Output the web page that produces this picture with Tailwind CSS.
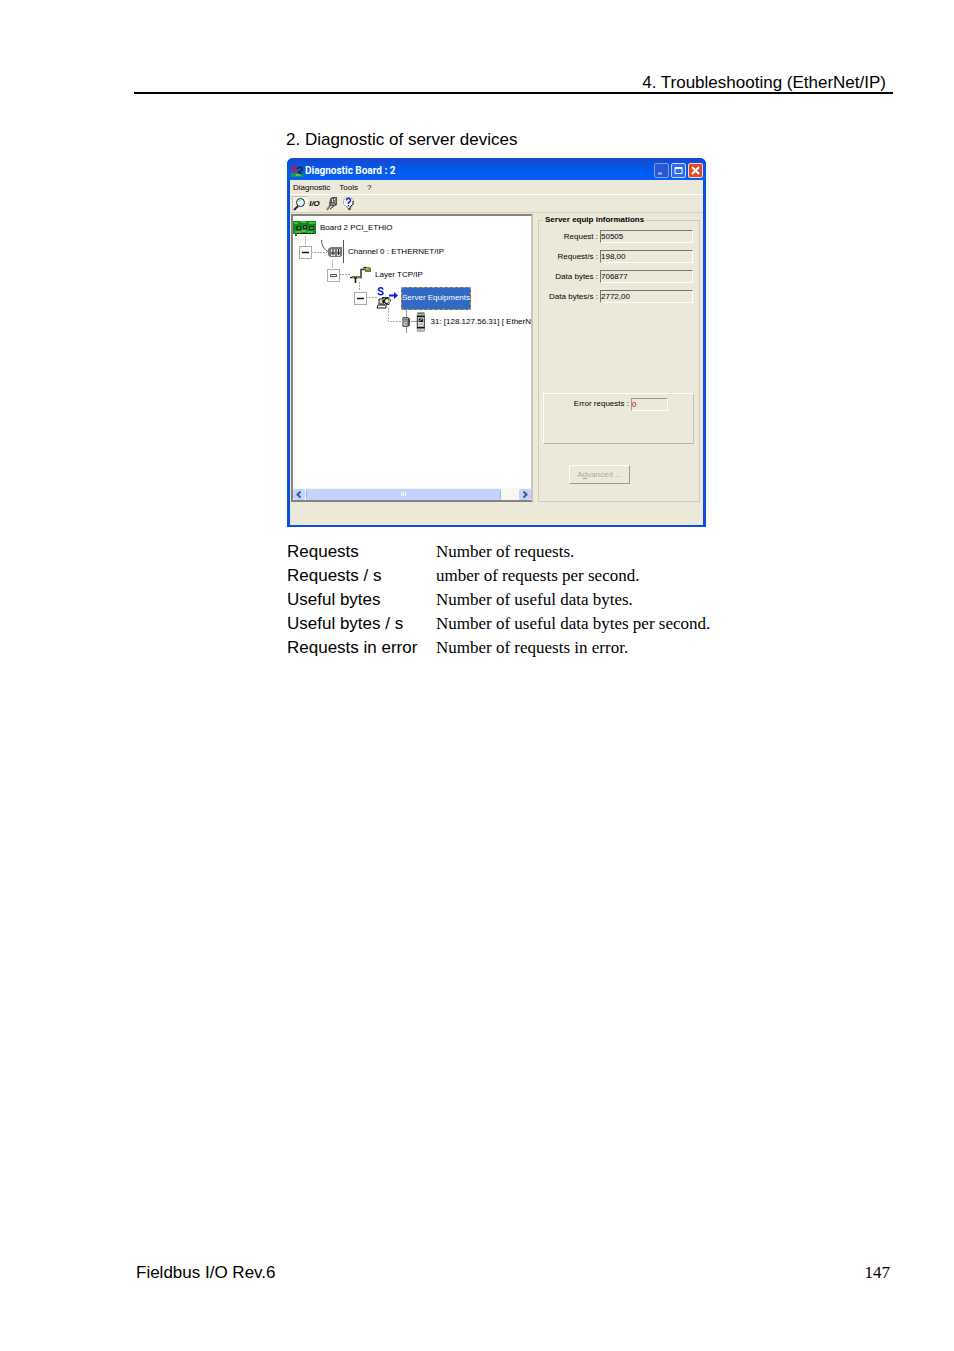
<!DOCTYPE html>
<html lang="en">

<head>
    <meta charset="UTF-8">
    <meta name="viewport" content="width=device-width, initial-scale=1.0">
    <title>Fieldbus I/O - Troubleshooting (EtherNet/IP)</title>
    <script src="https://cdn.jsdelivr.net/npm/@tailwindcss/browser@4"></script>
</head>

<body class="bg-white text-black font-['Liberation_Sans',Arial,sans-serif] text-[17px] leading-6">

    <div class="min-h-screen flex flex-col pl-[134px] pr-[61px] pt-[74px] pb-[66px]">

        <header class="border-b-2 border-black text-right pr-[7px] leading-[18px]">4. Troubleshooting (EtherNet/IP)</header>

        <main class="flex-1 pl-[152px] pt-[34px]">
            <h1>2. Diagnostic of server devices</h1>

            <!-- Diagnostic window -->
            <section class="ml-px mt-[6px] w-[419px] rounded-t-md bg-[#0a4fe0] pb-[2px] px-[3px] text-[8px] leading-3 overflow-hidden">

                <div class="-mx-[3px] h-[22px] flex items-center gap-[2px] pl-1 pr-[3px] pt-[3px] bg-linear-to-b from-[#1648c8] via-[#0058ee] to-[#0560f8] text-white">
                    <svg class="w-3 h-3" viewBox="0 0 12 12">
                        <path d="M0 8h12v4H0z" fill="#139a55" />
                        <path d="M1.500 1v7M1 1.500h2l2 2v3l-2 1" fill="none" stroke="#d5182c" stroke-width="1.500" />
                        <path d="M6 4l2-2 3 1v2L7 8M8 8l3 1" fill="none" stroke="#222" stroke-width="1.500" />
                        <path d="M5 10h5" stroke="#7ee0a0" />
                    </svg>
                    <span class="flex-1 font-bold text-[10px] font-[Roboto,sans-serif]">Diagnostic Board : 2</span>
                    <button aria-label="Minimize" class="w-[15px] h-[15px] rounded-xs border border-[#7d9cf0] bg-[#2a56cf]">
                        <svg viewBox="0 0 13 13"><path d="M3 9.500h4" stroke="#a9bdf5" stroke-width="2" /></svg>
                    </button>
                    <button aria-label="Maximize" class="w-[15px] h-[15px] rounded-xs border border-[#c5d5fb] bg-[#2f6bea]">
                        <svg viewBox="0 0 13 13"><path d="M3 3.500h7v6H3zM3 4.500h7" fill="none" stroke="#fff" /></svg>
                    </button>
                    <button aria-label="Close" class="w-[15px] h-[15px] rounded-xs border border-[#f6d5cc] bg-[#dc4b2a]">
                        <svg viewBox="0 0 13 13"><path d="M3 3l7 7M10 3l-7 7" stroke="#fff" stroke-width="2" /></svg>
                    </button>
                </div>

                <div class="bg-[#ece9d8] pb-[23px]">
                    <nav class="h-[15px] flex items-center gap-[9px] pl-[3px] pt-[2px] border-b border-white">
                        <button>Diagnostic</button>
                        <button>Tools</button>
                        <button>?</button>
                    </nav>

                    <div class="h-[18px] flex items-center pl-[2px] border-b border-[#d3d0bf]">
                        <button aria-label="Search" class="w-4 h-4 border-t border-l border-[#c9c6b6] bg-[#f4f2e8]">
                            <svg viewBox="0 0 15 15">
                                <path d="M5 9l-4 4" stroke="#222" stroke-width="2" />
                                <circle cx="7.500" cy="5.500" r="4" fill="#dff" stroke="#222" />
                                <path d="M5.500 4.500l2-1.500" stroke="#2cc" />
                            </svg>
                        </button>
                        <button class="w-[17px] font-bold italic text-[8px] leading-3 pr-1">I/O</button>
                        <button aria-label="Settings" class="w-4 h-4">
                            <svg viewBox="0 0 16 16">
                                <path d="M6 8l-4 6" stroke="#777" stroke-width="2" />
                                <path d="M5 13l4-3" stroke="#222" />
                                <path d="M5 3l2-2h5v8l-2 1H6L4 8z" fill="#555" />
                                <path d="M7 3h3v3H7z" fill="#eee" />
                                <path d="M10 2v5M6 8h4" stroke="#bbb" />
                                <path d="M8 4h1v2" fill="none" stroke="#111" />
                            </svg>
                        </button>
                        <button aria-label="Help" class="w-4 h-4">
                            <svg viewBox="0 0 16 16">
                                <path d="M7 1.500c7 0 7 9 2 10l-1 3-1-3c-6-1-6-10 0-10z" fill="#fff" stroke="#888" stroke-dasharray="2 1" />
                                <path d="M12 5v3l-3 3v3l-2-2" fill="none" stroke="#222" />
                                <path d="M5.500 4.500q0-2 2-2t2 2q0 1-2 2v1.500M7.500 9v1.500" fill="none" stroke="#22d" stroke-width="1.500" />
                            </svg>
                        </button>
                    </div>

                    <div class="flex gap-[5px] pl-px pr-[3px] pt-px">

                        <!-- Device tree -->
                        <div class="relative w-[242px] h-[288px] flex flex-col border-2 border-[#85837a] border-r-[#c9c6b6] bg-white overflow-hidden">
                            <svg class="absolute left-0 top-0 w-[238px] h-[120px]" viewBox="0 0 238 120" fill="none">
                                <path d="M12.500 20v10M18 36.500h16M39.500 44v8M46 58.500h12M66.500 66v8M73 81.500h12M95.500 92v13.500H109" stroke="#aaa" stroke-dasharray="2 1" />
                                <path d="M28.500 24q0 8 7 12" stroke="#555" />
                                <path d="M50.500 24v23" stroke="#555" />
                                <path d="M113.500 93v24M118 105.500h7" stroke="#999" />
                            </svg>

                            <ul class="relative flex-1 whitespace-nowrap">
                                <li class="h-6 flex items-center gap-[3px]">
                                    <svg class="w-6 h-4" viewBox="0 0 24 16">
                                        <path d="M0 1h23v13H4v2H2v-2H0z" fill="#118a1c" />
                                        <path d="M1 3h4M8 2h5M16 3h6M2 12h7M14 12h6" stroke="#54cf35" stroke-width="1.500" />
                                        <path d="M3 6h5v4H3zM10 5h4v4h-4zM16 6h5v4h-5z" fill="#173317" />
                                        <path d="M5 8h2M11 7h2M17 8h3M9 11h4" stroke="#c3dcbb" />
                                        <path d="M4 13.500h17" stroke="#111" stroke-dasharray="2 1" />
                                    </svg>
                                    <span>Board 2 PCI_ETHIO</span>
                                </li>
                                <li class="h-6 flex items-center pl-[6px]">
                                    <button aria-label="Collapse" class="w-[13px] h-[13px] border border-[#aaa] bg-white">
                                        <svg viewBox="0 0 11 11"><path d="M2 5.500h7" stroke="#111" stroke-width="1.500" /></svg>
                                    </button>
                                    <svg class="ml-4 mr-[5px] w-[15px] h-3" viewBox="0 0 15 12">
                                        <path d="M0 3l3-2h11v9l-2 1H2L0 9z" fill="#777" />
                                        <path d="M3 3h4v3H3zM9 3h3v3H9zM3 8h4v2H3zM9 8h3v2H9z" fill="#ddd" />
                                        <path d="M5 3v6M10.500 3v6" stroke="#222" />
                                    </svg>
                                    <span>Channel 0 : ETHERNET/IP</span>
                                </li>
                                <li class="h-[22px] flex items-center pl-[34px]">
                                    <button aria-label="Collapse" class="w-[13px] h-[13px] border border-[#aaa] bg-white">
                                        <svg viewBox="0 0 11 11"><path d="M2.500 4.500h6v2h-6z" fill="none" stroke="#555" /></svg>
                                    </button>
                                    <svg class="ml-[10px] mr-[3px] w-[22px] h-[18px]" viewBox="0 0 22 18">
                                        <path d="M0 11.500h11V3.500h6" fill="none" stroke="#333" stroke-width="1.500" />
                                        <path d="M5.500 12v5" stroke="#111" stroke-width="1.500" />
                                        <path d="M2 10h8v2H2z" fill="#777c3a" />
                                        <path d="M15 1h4l2 1v4h-6z" fill="#777c3a" />
                                        <path d="M16 3h3" stroke="#ddd" />
                                        <path d="M13 2l3-1M4 12h3" stroke="#111" />
                                    </svg>
                                    <span>Layer TCP/IP</span>
                                </li>
                                <li class="h-6 flex items-center pl-[61px]">
                                    <button aria-label="Collapse" class="w-[13px] h-[13px] border border-[#aaa] bg-white">
                                        <svg viewBox="0 0 11 11"><path d="M2 5.500h7" stroke="#111" stroke-width="1.500" /></svg>
                                    </button>
                                    <svg class="ml-[9px] mr-px w-6 h-6" viewBox="0 0 24 24">
                                        <path d="M7 3.500C6.500 1 2.500 1.500 2.500 3.500S7 5 7 7s-4 2.500-5 0" fill="none" stroke="#1616dc" stroke-width="1.500" />
                                        <path d="M13 9.500h6" stroke="#1616dc" stroke-width="2" />
                                        <path d="M18 6l4 3.500-4 3.500z" fill="#1616dc" />
                                        <path d="M3 13h6v5H3z" fill="#ddd" stroke="#222" />
                                        <path d="M2 19h8v3H1z" fill="#fff" stroke="#111" />
                                        <path d="M6 11h7l2 3-2 5H9l-3-3z" fill="#222" />
                                        <path d="M6 14l3-2M8 17l2 2" stroke="#eee11c" />
                                        <circle cx="11" cy="15" r="2" fill="#eee" />
                                        <path d="M12 12h1.500v5l-2 1" fill="none" stroke="#aaa" />
                                    </svg>
                                    <span class="h-[23px] flex items-center bg-[#316ac5] text-white border border-dashed border-[#c99b4a]">Server Equipments</span>
                                </li>
                                <li class="h-6 flex items-center pl-[109px]">
                                    <svg class="w-[10px] h-3" viewBox="0 0 10 12">
                                        <path d="M1 1h6v10H1z" fill="#bcbfb6" stroke="#333" />
                                        <path d="M7 1l2 1v8l-2 1z" fill="#444" />
                                        <path d="M2 3h4M2 5h4" stroke="#555" />
                                        <path d="M4 8h2" stroke="#2b8a4a" />
                                    </svg>
                                    <svg class="mx-[5px] w-[11px] h-6" viewBox="0 0 11 24">
                                        <path d="M1.500 1.500h8v21h-8z" fill="#ddd" stroke="#888" />
                                        <path d="M2 2.500h7" stroke="#4d9a5c" stroke-width="2" />
                                        <path d="M1 5.500h9M1 18.500h9" stroke="#111" stroke-width="2" />
                                        <path d="M3 8h5v4H3z" fill="#111" />
                                        <path d="M4 11l3-3" stroke="#fff" />
                                        <path d="M3 14.500h5M3 21h4" stroke="#999" />
                                        <path d="M1.500 7v10M9.500 7v10" stroke="#333" />
                                    </svg>
                                    <span>31: [128.127.56.31] [ EtherN</span>
                                </li>
                            </ul>

                            <!-- Horizontal scrollbar -->
                            <div class="h-3 flex items-center bg-[#f7f6f0]">
                                <button aria-label="Scroll left" class="w-3 h-[11px] rounded-xs bg-[#c3d3fd]">
                                    <svg class="w-3 h-[11px]" viewBox="0 0 12 11"><path d="M7.500 2.500l-3 3 3 3" fill="none" stroke="#3d5590" stroke-width="2" /></svg>
                                </button>
                                <div class="ml-px w-[195px] h-[11px] rounded-xs border-x border-[#9db2e8] bg-[#c3d3fd] flex justify-center items-center gap-px">
                                    <i class="w-px h-1 bg-white"></i>
                                    <i class="w-px h-1 bg-white"></i>
                                    <i class="w-px h-1 bg-white"></i>
                                </div>
                                <button aria-label="Scroll right" class="ml-auto w-3 h-[11px] rounded-xs bg-[#c3d3fd]">
                                    <svg class="w-3 h-[11px]" viewBox="0 0 12 11"><path d="M4.500 2.500l3 3-3 3" fill="none" stroke="#3d5590" stroke-width="2" /></svg>
                                </button>
                            </div>
                        </div>

                        <!-- Counters -->
                        <fieldset class="flex-1 min-w-0 flex flex-col border border-[#cfccba] pl-1 pr-[5px]">
                            <legend class="px-[2px] font-bold">Server equip informations</legend>

                            <div class="flex flex-col gap-[7px] pt-1 pr-px">
                                <div class="flex justify-end items-center gap-[2px]">
                                    <label for="request">Request :</label>
                                    <input id="request" readonly value="50505" class="w-[93px] h-[13px] border border-t-[#77756a] border-l-[#77756a] border-r-white border-b-white">
                                </div>
                                <div class="flex justify-end items-center gap-[2px]">
                                    <label for="request-s">Request/s :</label>
                                    <input id="request-s" readonly value="198,00" class="w-[93px] h-[13px] border border-t-[#77756a] border-l-[#77756a] border-r-white border-b-white">
                                </div>
                                <div class="flex justify-end items-center gap-[2px]">
                                    <label for="bytes">Data bytes :</label>
                                    <input id="bytes" readonly value="706877" class="w-[93px] h-[13px] border border-t-[#77756a] border-l-[#77756a] border-r-white border-b-white">
                                </div>
                                <div class="flex justify-end items-center gap-[2px]">
                                    <label for="bytes-s">Data bytes/s :</label>
                                    <input id="bytes-s" readonly value="2772,00" class="w-[93px] h-[13px] border border-t-[#77756a] border-l-[#77756a] border-r-white border-b-white">
                                </div>
                            </div>

                            <div class="mt-[90px] h-[51px] flex justify-end items-start gap-[2px] pt-1 pr-[25px] border border-t-white border-l-white border-r-[#c3c0ae] border-b-[#b5b2a1]">
                                <label for="errors">Error requests :</label>
                                <input id="errors" readonly value="0" class="w-[37px] h-[13px] text-[#c00000] border border-t-[#99968a] border-l-[#99968a] border-r-white border-b-white">
                            </div>

                            <button disabled class="mt-[21px] ml-[26px] w-[61px] h-[19px] border border-t-white border-l-white border-r-[#99968a] border-b-[#99968a] text-[#aca899]">A<u>d</u>vanced ...</button>
                        </fieldset>
                    </div>
                </div>
            </section>

            <dl class="ml-px mt-[13px] grid grid-cols-[149px_1fr]">
                <dt>Requests</dt>
                <dd class="font-['Liberation_Serif',serif]">Number of requests.</dd>
                <dt>Requests / s</dt>
                <dd class="font-['Liberation_Serif',serif]">umber of requests per second.</dd>
                <dt>Useful bytes</dt>
                <dd class="font-['Liberation_Serif',serif]">Number of useful data bytes.</dd>
                <dt>Useful bytes / s</dt>
                <dd class="font-['Liberation_Serif',serif]">Number of useful data bytes per second.</dd>
                <dt>Requests in error</dt>
                <dd class="font-['Liberation_Serif',serif]">Number of requests in error.</dd>
            </dl>
        </main>

        <footer class="flex justify-between pl-[2px] pr-[3px]">
            <span>Fieldbus I/O Rev.6</span>
            <span class="font-['Liberation_Serif',serif]">147</span>
        </footer>
    </div>

</body>

</html>
